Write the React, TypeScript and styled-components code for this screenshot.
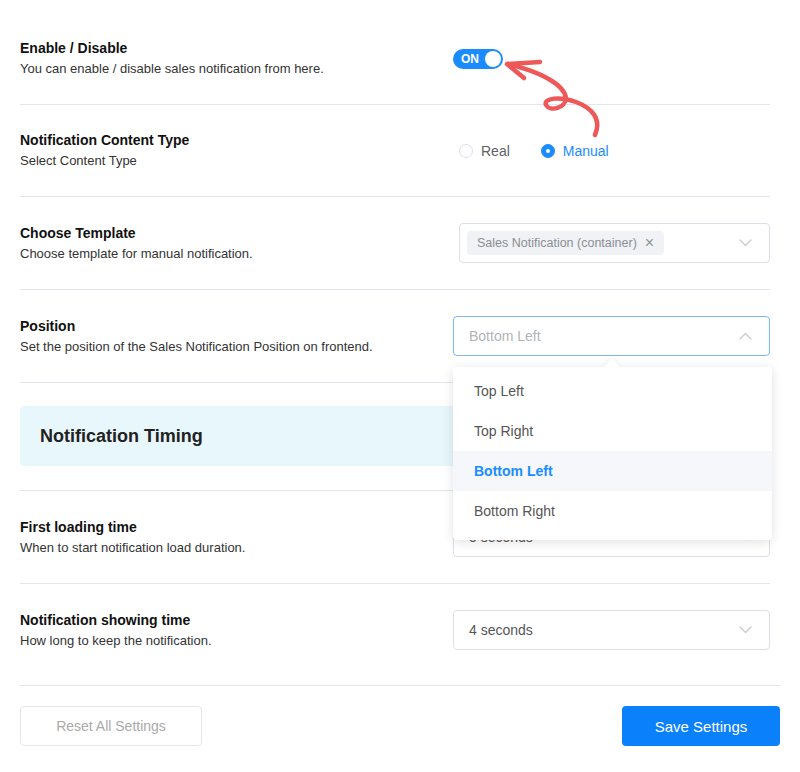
import { FC } from "react";
import styled, { createGlobalStyle } from "styled-components";

//全体スタイル
const GlobalStyle = createGlobalStyle`
  body {
    margin: 0;
    background: #fff;
    font-family: "Liberation Sans", Arial, sans-serif;
  }
  * { box-sizing: border-box; }
`;

const BLUE = "#1a8cff";

//下矢印・上矢印
const Chevron: FC<{ up?: boolean }> = ({ up }) => (
  <svg width="13" height="8" viewBox="0 0 13 8" fill="none">
    <path
      d={up ? "M1 7 L6.5 1.5 L12 7" : "M1 1 L6.5 6.5 L12 1"}
      stroke="#c6c9cf"
      strokeWidth="1.2"
      strokeLinecap="round"
      strokeLinejoin="round"
    />
  </svg>
);

const positions = ["Top Left", "Top Right", "Bottom Left", "Bottom Right"];

const App: FC = () => {
  return (
    <Page>
      <GlobalStyle />
      <Section>
        <Row>
          <Label>
            <Title>Enable / Disable</Title>
            <Desc>You can enable / disable sales notification from here.</Desc>
          </Label>
          <Control>
            <Toggle>
              <span>ON</span>
              <Knob />
            </Toggle>
          </Control>
        </Row>

        <Row>
          <Label>
            <Title>Notification Content Type</Title>
            <Desc>Select Content Type</Desc>
          </Label>
          <Control>
            <RadioGroup>
              <RadioItem>
                <RadioDot />
                <RadioText>Real</RadioText>
              </RadioItem>
              <RadioItem>
                <RadioDot checked />
                <RadioText checked>Manual</RadioText>
              </RadioItem>
            </RadioGroup>
          </Control>
        </Row>

        <Row>
          <Label>
            <Title>Choose Template</Title>
            <Desc>Choose template for manual notification.</Desc>
          </Label>
          <Control>
            <Select $inset>
              <Tag>
                Sales Notification (container)
                <TagClose>×</TagClose>
              </Tag>
              <Chevron />
            </Select>
          </Control>
        </Row>

        <Row>
          <Label>
            <Title>Position</Title>
            <Desc>Set the position of the Sales Notification Position on frontend.</Desc>
          </Label>
          <Control>
            <Select $focused>
              <SelectText $placeholder>Bottom Left</SelectText>
              <Chevron up />
            </Select>
            <Dropdown>
              <Caret />
              {positions.map((p) => (
                <Option key={p} $active={p === "Bottom Left"}>
                  {p}
                </Option>
              ))}
            </Dropdown>
          </Control>
        </Row>

        <Banner>
          <BannerInner>Notification Timing</BannerInner>
        </Banner>

        <Row>
          <Label>
            <Title>First loading time</Title>
            <Desc>When to start notification load duration.</Desc>
          </Label>
          <Control>
            <Select>
              <SelectText>5 seconds</SelectText>
              <Chevron />
            </Select>
          </Control>
        </Row>

        <Row $last>
          <Label>
            <Title>Notification showing time</Title>
            <Desc>How long to keep the notification.</Desc>
          </Label>
          <Control>
            <Select>
              <SelectText>4 seconds</SelectText>
              <Chevron />
            </Select>
          </Control>
        </Row>
      </Section>

      <Footer>
        <ResetButton>Reset All Settings</ResetButton>
        <SaveButton>Save Settings</SaveButton>
      </Footer>

      {/* 赤い手書き矢印 */}
      <Annotation width="800" height="160" viewBox="0 0 800 160">
        <path
          d="M595 135 C602 119, 592 108, 576 102 C560 96, 543 98, 546 105 C550 112, 566 108, 566 98 C564 84, 540 72, 508 64"
          stroke="#ee5858"
          strokeWidth="4.5"
          fill="none"
          strokeLinecap="round"
        />
        <path
          d="M540 62 L507 64 L524 78"
          stroke="#ee5858"
          strokeWidth="4.5"
          fill="none"
          strokeLinecap="round"
          strokeLinejoin="round"
        />
      </Annotation>
    </Page>
  );
};

export default App;

//Style
const Page = styled.div`
  position: relative;
  width: 800px;
  padding: 13px 20px 26px;
`;

const Section = styled.div`
  padding-right: 10px;
`;

const Row = styled.div<{ $last?: boolean }>`
  display: flex;
  align-items: center;
  padding: 26px 0 26px;
  border-bottom: ${(p) => (p.$last ? "none" : "1px solid #e4e4ec")};
`;

const Label = styled.div`
  flex: 1;
`;

const Title = styled.div`
  font-size: 14px;
  line-height: 18px;
  font-weight: bold;
  color: #111;
`;

const Desc = styled.div`
  margin-top: 3px;
  font-size: 13px;
  line-height: 18px;
  color: #333;
`;

const Control = styled.div`
  position: relative;
  width: 317px;
`;

const Toggle = styled.div`
  width: 50px;
  height: 20px;
  border-radius: 10px;
  background: ${BLUE};
  display: flex;
  align-items: center;
  justify-content: space-between;
  padding: 0 2px 0 8px;
  color: #fff;
  font-size: 12px;
  font-weight: bold;
`;

const Knob = styled.div`
  width: 16px;
  height: 16px;
  border-radius: 50%;
  background: #fff;
`;

const RadioGroup = styled.div`
  display: flex;
  gap: 31px;
  padding-left: 6px;
`;

const RadioItem = styled.div`
  display: flex;
  align-items: center;
  gap: 8px;
`;

const RadioDot = styled.span<{ checked?: boolean }>`
  width: 14px;
  height: 14px;
  border-radius: 50%;
  border: 1px solid ${(p) => (p.checked ? BLUE : "#dcdfe6")};
  background: ${(p) => (p.checked ? BLUE : "#fff")};
  display: flex;
  align-items: center;
  justify-content: center;
  &::after {
    content: "";
    width: 4px;
    height: 4px;
    border-radius: 50%;
    background: #fff;
  }
`;

const RadioText = styled.span<{ checked?: boolean }>`
  font-size: 14px;
  color: ${(p) => (p.checked ? BLUE : "#606266")};
`;

const Select = styled.div<{ $focused?: boolean; $inset?: boolean }>`
  height: 40px;
  margin-left: ${(p) => (p.$inset ? "6px" : "0")};
  border: 1px solid ${(p) => (p.$focused ? "#79b8ff" : "#dcdfe6")};
  border-radius: 4px;
  background: #fff;
  display: flex;
  align-items: center;
  justify-content: space-between;
  padding: 0 17px 0 ${(p) => (p.$inset ? "7px" : "15px")};
`;

const SelectText = styled.span<{ $placeholder?: boolean }>`
  font-size: 14px;
  color: ${(p) => (p.$placeholder ? "#b0b3b8" : "#555")};
`;

const Tag = styled.span`
  height: 24px;
  display: inline-flex;
  align-items: center;
  gap: 8px;
  padding: 0 10px 0 10px;
  background: #f0f2f5;
  border-radius: 4px;
  font-size: 12.5px;
  color: #8b8e94;
`;

const TagClose = styled.span`
  font-size: 16px;
  line-height: 16px;
  color: #909399;
`;

const Dropdown = styled.div`
  position: absolute;
  top: 51px;
  left: 0;
  width: 319px;
  padding: 4px 0 9px;
  background: #fff;
  border-radius: 4px;
  box-shadow: 0 2px 12px rgba(0, 0, 0, 0.12);
  z-index: 10;
`;

const Caret = styled.div`
  position: absolute;
  top: -6px;
  left: 153px;
  width: 12px;
  height: 12px;
  background: #fff;
  transform: rotate(45deg);
  box-shadow: -2px -2px 4px rgba(0, 0, 0, 0.04);
`;

const Option = styled.div<{ $active?: boolean }>`
  position: relative;
  height: 40px;
  display: flex;
  align-items: center;
  padding-left: 21px;
  font-size: 14px;
  font-weight: ${(p) => (p.$active ? "bold" : "normal")};
  color: ${(p) => (p.$active ? BLUE : "#555")};
  background: ${(p) => (p.$active ? "#f5f7fa" : "transparent")};
`;

const Banner = styled.div`
  padding: 23px 0 24px;
  border-bottom: 1px solid #e4e4ec;
`;

const BannerInner = styled.div`
  height: 60px;
  background: #e8f7fb;
  border-radius: 4px;
  display: flex;
  align-items: center;
  padding-left: 20px;
  font-size: 18px;
  font-weight: bold;
  color: #222;
`;

const Footer = styled.div`
  margin-top: 9px;
  padding-top: 20px;
  border-top: 1px solid #e4e4ec;
  display: flex;
  justify-content: space-between;
`;

const ResetButton = styled.button`
  width: 182px;
  height: 40px;
  border: 1px solid #e6e6ea;
  border-radius: 4px;
  background: #fff;
  font-family: inherit;
  font-size: 14px;
  color: #aaa;
`;

const SaveButton = styled.button`
  width: 158px;
  height: 40px;
  border: none;
  border-radius: 4px;
  background: #0b80fb;
  font-family: inherit;
  font-size: 15px;
  color: #fff;
`;

const Annotation = styled.svg`
  position: absolute;
  top: 0;
  left: 0;
  pointer-events: none;
  z-index: 5;
`;
